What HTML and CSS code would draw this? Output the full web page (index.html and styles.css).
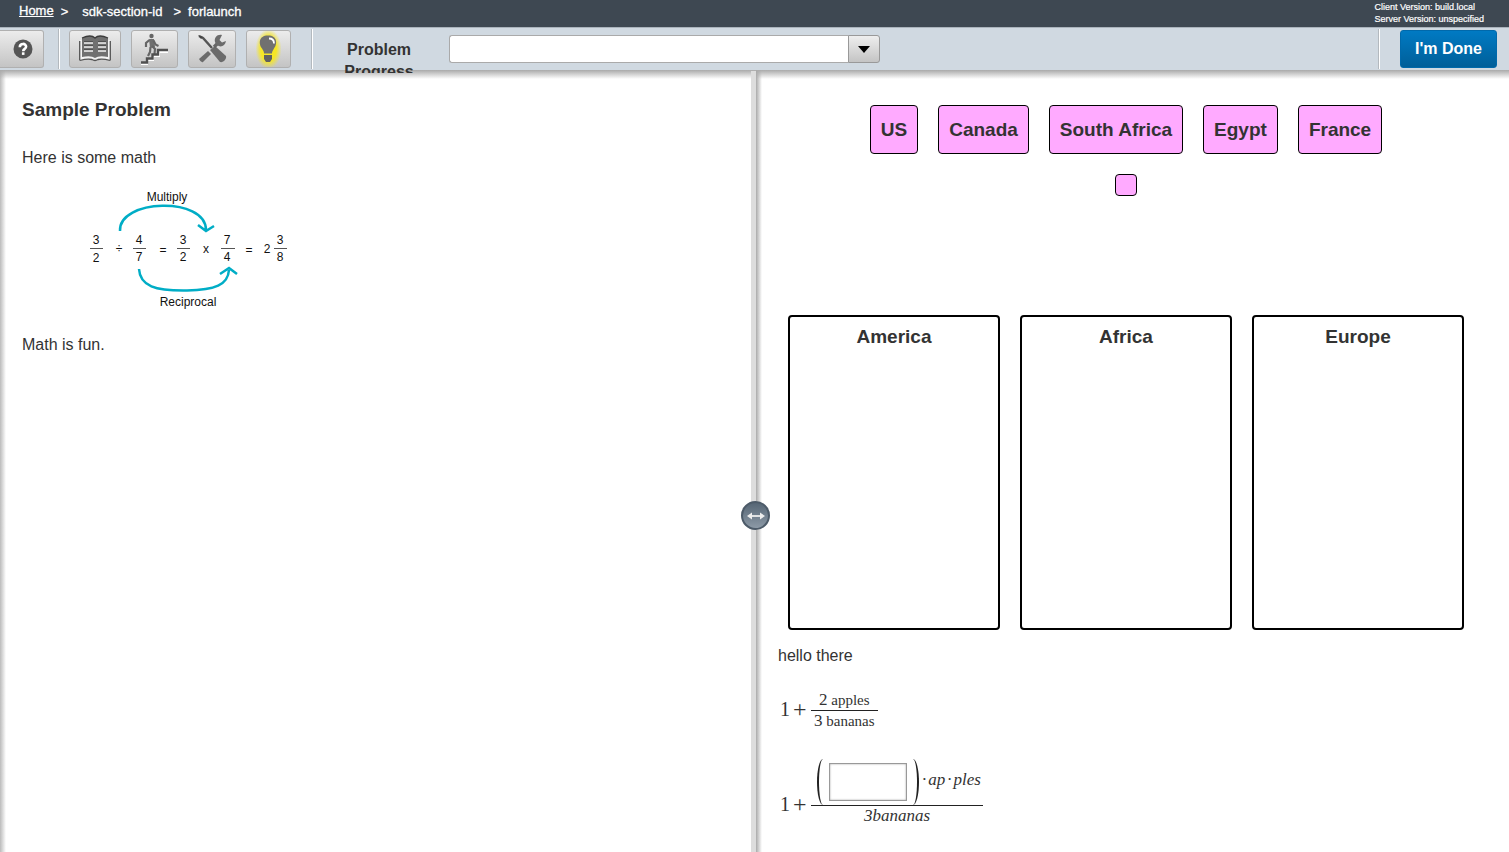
FILE: index.html
```html
<!DOCTYPE html>
<html lang="en">
<head>
<meta charset="utf-8">
<title>Sample Problem</title>
<link rel="stylesheet" href="styles.css">
</head>
<body>
<header class="topbar">
  <nav class="crumbs" aria-label="Breadcrumb">
    <a href="#">Home</a><span class="arrow">&gt;</span><span class="section">sdk-section-id</span><span class="arrow">&gt;</span><span>forlaunch</span>
  </nav>
  <div class="versions">
    <div>Client Version: build.local</div>
    <div>Server Version: unspecified</div>
  </div>
</header>

<div class="toolbar">
  <button class="tool help" aria-label="Help">
    <svg width="20" height="20" viewBox="0 0 20 20"><circle cx="10" cy="10" r="9.5" fill="#555"/><path d="M6.8 8.2C6.8 3.800 13.300 4 13.100 7.800 13 10 10.200 9.800 10.200 12.200" fill="none" stroke="#fff" stroke-width="2.600"/><rect x="8.900" y="13.300" width="2.600" height="2.600" fill="#fff"/></svg>
  </button>
  <span class="sep"></span>
  <div class="tools">
    <button class="tool book" aria-label="Reference">
      <svg width="32" height="28" viewBox="0 0 32 28"><path d="M1 5v20q8-2 13-1 2 2 4 0 5-1 13 1V5" fill="#f2f2f2"/><path d="M.700 6v19.500M31.300 6v19.500M1 25.500q7-2 12-1 3 2 6 0 5-1 12 1" fill="none" stroke="#555" stroke-width="1.300"/><path d="M3 3q9-4 13 0 4-4 13 0v19q-9-2-13 1-4-3-13-1z" fill="#707070"/><path d="M3 3q9-4 13 0 4-4 13 0" fill="none" stroke="#3c3c3c" stroke-width="1.300"/><path d="M5 7h9M5 11h9M5 15h9M19 7h8M19 11h8M19 15h8" stroke="#333" stroke-width="1"/><path d="M5 8h9M5 12h9M5 16h9M19 8h8M19 12h8M19 16h8" stroke="#f4f4f4" stroke-width="1.500"/></svg>
    </button>
    <button class="tool stairs" aria-label="Steps">
      <svg width="30" height="32" viewBox="0 0 30 32"><circle cx="11.500" cy="3" r="2.200" fill="#666"/><path d="M9 6h5l1 8-5 1z" fill="#707070"/><path d="M9.500 7L6 10v4M13.500 7.500l2 4 3 1.500M12 13l3 3-.500 5M10.500 14L10 19l-2 4" fill="none" stroke="#666" stroke-width="2.200"/><path d="M1 30h6v-4h6v-4h6v-4h9" fill="none" stroke="#fff" stroke-width="2" transform="translate(0 1)"/><path d="M1 29.500h6v-4h5.500v-4H18v-4.500h10" fill="none" stroke="#505050" stroke-width="2.400"/></svg>
    </button>
    <button class="tool wrench" aria-label="Tools">
      <svg width="32" height="32" viewBox="0 0 32 32"><path d="M3 3l4 2 9 10" fill="none" stroke="#555" stroke-width="2.400"/><path d="M2 2l5 2-2 2z" fill="#444"/><path d="M14 17l5-4 11 10c1 3-3 7-6 6z" fill="#6b6b6b"/><path d="M3 26l9-8 3 3-8 8q-2 1-4-3z" fill="#6b6b6b"/><path d="M18 14l4-4" stroke="#666" stroke-width="3.400"/><path d="M26 2c-5-1-8 3-7 7 2 6 10 6 11-1l-4 1.500L23.500 7z" fill="#6b6b6b"/></svg>
    </button>
    <button class="tool bulb" aria-label="Hint">
      <svg width="28" height="32" viewBox="0 0 28 32"><path d="M13 2.500C3.500 2.500 3.500 11 7 15.500c2 3 2 4 2 5h8c0-1 0-2 2-5 3.500-4.500 3.500-13-6-13z" fill="#707070"/><path d="M9 22h8v4l-2 3h-4l-2-3z" fill="#606060"/><path d="M14 5.500q5 0 5 5" fill="none" stroke="#fff" stroke-width="1.800"/></svg>
    </button>
  </div>
  <span class="sep"></span>
  <label class="progress-label" for="progress">Problem Progress</label>
  <div class="combo">
    <input id="progress" type="text">
    <button aria-label="Show problems"><svg width="12" height="7" viewBox="0 0 12 7"><path d="M0 0h12L6 7z"/></svg></button>
  </div>
  <span class="sep end"></span>
  <button class="done">I'm Done</button>
</div>

<main class="panes">
  <section class="pane left">
    <h1>Sample Problem</h1>
    <p>Here is some math</p>
    <svg class="figure" width="220" height="130" viewBox="80 185 220 130" role="img" aria-label="Dividing fractions">
      <g fill="none" stroke="#00adc6" stroke-width="2.500">
        <path d="M120 231C118 199 206 196 206 230M198 225l8 6 8-5"/>
        <path d="M139 269C140 286 155 291 187 290.500 215 290 228 285 229 270M220 274l9-6 8 6"/>
      </g>
      <path d="M90 248.500h13M133 248.500h13M177 248.500h13M221 248.500h14M274 248.500h13" stroke="#555"/>
      <g class="figure-text">
        <text x="167" y="201">Multiply</text><text x="188" y="306">Reciprocal</text>
        <text x="96" y="244">3</text><text x="96" y="262">2</text><text x="119" y="253">÷</text>
        <text x="139" y="244">4</text><text x="139" y="261">7</text><text x="163" y="254">=</text>
        <text x="183" y="244">3</text><text x="183" y="261">2</text><text x="206" y="253">x</text>
        <text x="227" y="244">7</text><text x="227" y="261">4</text><text x="249" y="254">=</text>
        <text x="267" y="253">2</text><text x="280" y="244">3</text><text x="280" y="261">8</text>
      </g>
    </svg>
    <p>Math is fun.</p>
  </section>
  <div class="divider">
    <button class="handle" aria-label="Resize panes"><svg width="18" height="8" viewBox="0 0 18 8"><path d="M3 4h12" stroke="#eee" stroke-width="1.800"/><path d="M0 4l5-3.500v7zM18 4l-5-3.500v7z" fill="#eee"/></svg></button>
  </div>
  <section class="pane right">
    <div class="tray">
      <div class="chip">US</div><div class="chip">Canada</div><div class="chip">South Africa</div><div class="chip">Egypt</div><div class="chip">France</div><div class="chip"></div>
    </div>
    <div class="bins">
      <div class="bin">America</div><div class="bin">Africa</div><div class="bin">Europe</div>
    </div>
    <p>hello there</p>
    <div class="math first">
      <span class="lead"><span>1</span><span>+</span></span>
      <div class="frac small"><div class="num"><b>2</b> apples</div><div class="den"><b>3</b> bananas</div></div>
    </div>
    <div class="math second">
      <span class="lead"><span>1</span><span>+</span></span>
      <div class="frac italic"><div class="num"><span class="paren open"></span><input type="text" aria-label="Factor"><span class="paren close"></span><span class="product"><span>·</span><span>ap</span><span>·</span><span>ples</span></span></div><div class="den">3bananas</div></div>
    </div>
  </section>
</main>
</body>
</html>
```

FILE: styles.css
```css
* { box-sizing: border-box; }

body {
  margin: 0;
  height: 100vh;
  display: flex;
  flex-direction: column;
  overflow: hidden;
  font: 16px/20px "Liberation Sans", Arial, sans-serif;
  color: #333;
  background: #fff;
}

button { padding: 0; cursor: pointer; font-family: inherit; }

.topbar {
  display: flex;
  justify-content: space-between;
  flex: none;
  height: 27px;
  padding: 0 25px 0 19px;
  background: #3e4852;
  color: #fff;
}
.crumbs { display: flex; font-size: 13px; line-height: 23px; -webkit-text-stroke: 0.3px #fff; }
.crumbs a { color: #fff; line-height: 21px; }
.arrow { margin: 0 7px; }
.section { margin: 0 4px 0 7px; }
.versions { font-size: 9px; line-height: 12px; padding-top: 1px; -webkit-text-stroke: 0.2px #fff; }

.toolbar {
  display: flex;
  align-items: center;
  flex: none;
  position: relative;
  z-index: 2;
  height: 43px;
  padding-right: 12px;
  border-top: 1px solid #aab3bc;
  background: #d0d9e1;
}
.tool {
  display: flex;
  align-items: center;
  justify-content: center;
  height: 38px;
  border: 1px solid #b0b0b0;
  border-radius: 3px;
  background: linear-gradient(#ececec, #c4c4c4);
}
.help { width: 44px; padding-left: 3px; border-left: 0; border-radius: 0 3px 3px 0; }
.tools { display: flex; gap: 10px; margin: 0 20px 0 9px; }
.book { width: 52px; }
.stairs { width: 47px; }
.wrench { width: 48px; }
.bulb { width: 45px; background: radial-gradient(ellipse 13px 20px, #f5e626 60%, #f5e62600 100%), linear-gradient(#ececec, #c4c4c4); }
.sep { width: 2px; height: 40px; border-left: 1px solid #b3b9be; background: #fff; }
.help + .sep { margin-left: 14px; }
.progress-label {
  width: 100px;
  height: 34px;
  margin: 14px 20px 0 16px;
  overflow: hidden;
  text-align: center;
  font-weight: bold;
  line-height: 22px;
}
.combo { display: flex; width: 431px; height: 28px; }
.combo input { flex: 1; min-width: 0; border: 1px solid #aaa; border-right: 0; border-radius: 3px 0 0 3px; background: #fff; }
.combo button {
  width: 32px;
  border: 1px solid #999;
  border-radius: 0 3px 3px 0;
  background: linear-gradient(#eee, #c4c4c4);
}
.combo svg { display: block; margin: auto; }
.end { margin-left: auto; }
.done {
  width: 97px;
  height: 38px;
  margin-left: 20px;
  border: 1px solid #0069ab;
  border-radius: 3px;
  background: linear-gradient(#007ac3, #005f99);
  color: #fff;
  font-size: 16px;
  font-weight: bold;
}

.panes {
  display: grid;
  grid-template-columns: minmax(0, 751fr) 5px minmax(0, 753fr);
  flex: 1;
  min-height: 0;
  position: relative;
}
.panes::before {
  content: "";
  position: absolute;
  inset: 0 0 auto;
  height: 9px;
  background: linear-gradient(#aaa, #aaa0);
}
.pane { overflow: hidden; }
.left { padding: 30px 22px; background: linear-gradient(90deg, #bbb, #fff 6px); }
.right { padding: 35px 35px 0 22px; background: linear-gradient(90deg, #aaa, #fff 6px); }
.divider { position: relative; z-index: 1; margin-top: 1px; background: #ddd; }
.handle {
  position: absolute;
  top: 430px;
  left: -10px;
  width: 29px;
  height: 29px;
  border: 2px solid #4d5b69;
  border-radius: 50%;
  background: linear-gradient(#566675, #8c99a6);
}
.handle svg { display: block; margin: auto; }

h1 { margin: 0 0 28px; font-size: 19px; line-height: 20px; }
p { margin: 0; }
.figure { display: block; margin: 17px 0 20px 58px; }
.figure-text { font-size: 12px; text-anchor: middle; fill: #111; }

.tray {
  display: flex;
  flex-wrap: wrap;
  justify-content: center;
  align-content: flex-start;
  gap: 20px;
  min-height: 210px;
}
.chip {
  min-height: 22px;
  padding: 10px;
  align-self: flex-start;
  border: 1px solid #000;
  border-radius: 4px;
  background: #faf;
  font-size: 19px;
  font-weight: bold;
  line-height: 27px;
}
.chip:empty { margin: 0 100px; }
.bins { display: flex; gap: 20px; margin: 0 10px 16px; }
.bin {
  flex: 1;
  height: 315px;
  padding-top: 10px;
  border: 2px solid #000;
  border-radius: 4px;
  text-align: center;
  font-size: 19px;
  font-weight: bold;
}

.math { display: flex; align-items: center; padding-left: 2px; font-family: "Liberation Serif", "Times New Roman", serif; }
.lead { display: flex; gap: 3px; width: 31px; font-size: 20px; }
.lead span + span { font-size: 24px; }
.frac { text-align: center; }
.den { border-top: 1px solid #222; }
.small { font-size: 15px; line-height: 20px; }
.small b { font-size: 17px; font-weight: normal; }
.small .den, .small .num { padding: 0 3px; }
.first { margin-top: 24px; }
.first .lead { margin-bottom: 3px; }
.second { margin-top: 28px; align-items: flex-end; }
.second .lead { margin-bottom: 12px; }
.italic { font-size: 17px; font-style: italic; line-height: 20px; }
.italic .num { display: flex; align-items: center; padding: 0 2px 0 6px; }
.italic input {
  width: 78px;
  height: 38px;
  margin: 0 6px;
  border: 1px solid #999;
  background: #fff;
  box-shadow: inset 0 0 2px #999;
}
.paren { width: 6px; height: 46px; border: 0 solid #222; }
.open { border-left-width: 2px; border-radius: 100% 0 0 100% / 50% 0 0 50%; }
.close { border-right-width: 2px; border-radius: 0 100% 100% 0 / 0 50% 50% 0; margin-right: 3px; }
.product { display: flex; gap: 2px; padding-bottom: 4px; }
```
